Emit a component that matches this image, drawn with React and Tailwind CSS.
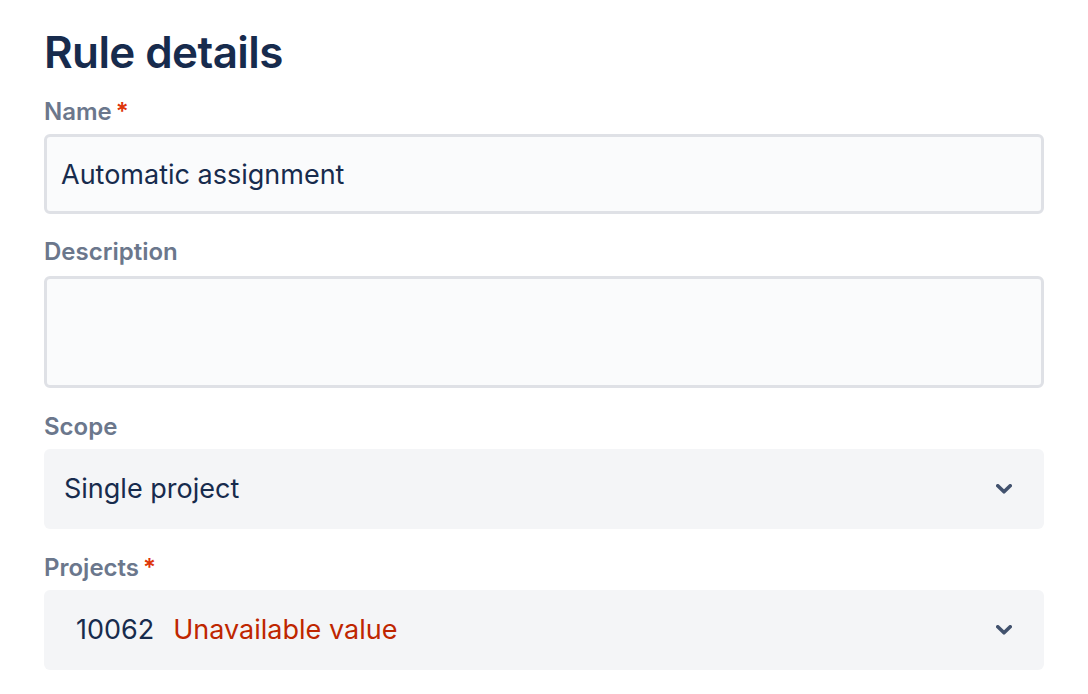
import React from "react";

function Chevron() {
  return (
    <svg width="16" height="10" viewBox="0 0 16 10" className="shrink-0">
      <path d="M1.8 1.8 L8 7.8 L14.2 1.8" fill="none" stroke="#42526E" strokeWidth="3.6" strokeLinecap="round" strokeLinejoin="round" />
    </svg>
  );
}

function Label({ children, required }) {
  return (
    <div className="flex items-center text-[24px] leading-[28px] font-semibold text-[#6B778C]">
      {children}
      {required && <span className="ml-[4px] text-[#DE350B]">*</span>}
    </div>
  );
}

export default function App() {
  return (
    <div className="min-h-screen bg-white font-['Inter','Liberation_Sans',sans-serif]">
      <div className="w-[1000px] ml-[44px] pt-[25px]">
        <h1 className="text-[44px] leading-[54px] font-semibold tracking-[-0.6px] text-[#172B4D]">
          Rule details
        </h1>

        <div className="mt-[19px]">
          <Label required>Name</Label>
          <div className="mt-[8px] h-[80px] flex items-center px-[14px] pt-[3px] border-[3px] border-[#DFE1E6] bg-[#FAFBFC] rounded-[6px] text-[27px] text-[#172B4D]">
            Automatic assignment
          </div>
        </div>

        <div className="mt-[24px]">
          <Label>Description</Label>
          <div className="mt-[10px] h-[112px] border-[3px] border-[#DFE1E6] bg-[#FAFBFC] rounded-[6px]" />
        </div>

        <div className="mt-[25px]">
          <Label>Scope</Label>
          <div className="mt-[8px] h-[80px] flex items-center justify-between pl-[20px] pr-[32px] bg-[#F4F5F7] rounded-[6px] text-[27px] text-[#172B4D]">
            <span>Single project</span>
            <Chevron />
          </div>
        </div>

        <div className="mt-[25px]">
          <Label required>Projects</Label>
          <div className="mt-[8px] h-[80px] flex items-center justify-between pl-[32px] pr-[32px] bg-[#F4F5F7] rounded-[6px] text-[27px]">
            <span>
              <span className="text-[#172B4D]">10062</span>
              <span className="ml-[19px] text-[#BF2600]">Unavailable value</span>
            </span>
            <Chevron />
          </div>
        </div>
      </div>
    </div>
  );
}
